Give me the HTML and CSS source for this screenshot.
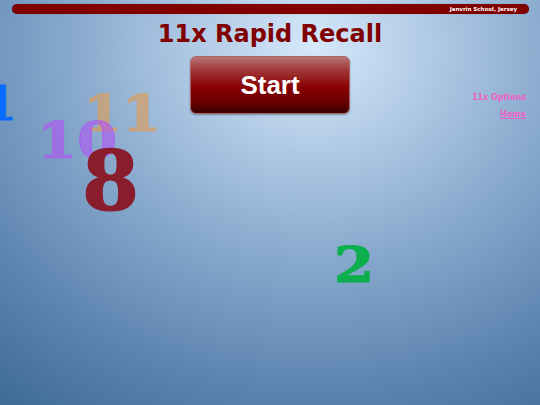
FILE: index.html
```html
<!DOCTYPE html>
<html>
<head>
<meta charset="utf-8">
<link rel="stylesheet" href="styles.css">
</head>
<body>
<div class="page">
  <div class="topbar"><span class="school">Janvrin School, Jersey</span></div>
  <h1 class="title">11x Rapid Recall</h1>
  <div class="main">
    <div class="spacer"></div>
    <button class="start">Start</button>
    <nav class="links">
      <a class="opt">11x Options</a>
      <a class="home">Home</a>
    </nav>
  </div>
  <div class="canvas">
    <span class="num n1">1</span>
    <span class="num n11">11</span>
    <span class="num n10">10</span>
    <span class="num n8">8</span>
    <span class="num n2">2</span>
  </div>
</div>
</body>
</html>
```
FILE: styles.css
```css
html, body {
  margin: 0;
  padding: 0;
  width: 540px;
  height: 405px;
  overflow: hidden;
}
body {
  background: radial-gradient(ellipse 95% 110% at 58% 12%, #d6e8fb 0%, #b2cbe6 22%, #86a8cc 48%, #5f86b2 75%, #3f6a98 100%);
  font-family: "DejaVu Sans", Verdana, sans-serif;
}
.page {
  position: relative;
  width: 540px;
  height: 405px;
}
.topbar {
  margin: 4px 11px 0 12px;
  height: 10px;
  background: #800000;
  border-radius: 5px;
  display: flex;
  justify-content: flex-end;
  align-items: center;
  padding-right: 12px;
  box-shadow: 0 0 1px rgba(0,0,0,0.4);
}
.school {
  color: #fff;
  font-size: 5.5px;
  font-weight: bold;
}
.title {
  margin: 5px 0 0 0;
  text-align: center;
  color: #800000;
  font-size: 24px;
  font-weight: bold;
  line-height: 30px;
}
.main {
  display: grid;
  grid-template-columns: 1fr 160px 1fr;
  margin-top: 7px;
}
.start {
  width: 160px;
  height: 58px;
  border: 1px solid #a86666;
  border-radius: 6px;
  background: linear-gradient(to bottom, #b87575 0%, #a03a3a 22%, #880000 55%, #6a0000 80%, #3a0000 100%);
  color: #fff;
  font-family: "Liberation Sans", Arial, sans-serif;
  font-weight: bold;
  font-size: 26px;
  padding: 0;
  box-shadow: 0 1px 2px rgba(0,0,0,0.35);
}
.links {
  display: flex;
  flex-direction: column;
  align-items: flex-end;
  padding: 37px 14px 0 0;
  gap: 7px;
}
.links a {
  color: #f25fc4;
  font-size: 8px;
  font-weight: bold;
  line-height: 10px;
}
.links .home {
  text-decoration: underline;
}
.num {
  position: absolute;
  font-family: "DejaVu Serif", "Liberation Serif", serif;
  font-weight: bold;
  line-height: 1;
  -webkit-text-stroke: 1.2px currentColor;
  transform-origin: left top;
}
.n1 { left: -17px; top: 77px; font-size: 46px; color: #0a6cff; transform: scaleX(1.05); }
.n11 { left: 83px; top: 84px; font-size: 51px; color: rgba(214, 160, 104, 0.72); transform: scaleX(1.1); }
.n10 { left: 37px; top: 112px; font-size: 50px; color: rgba(176, 84, 245, 0.6); transform: scaleX(1.15); }
.n8 { left: 82px; top: 136px; font-size: 82px; color: #8a1d2c; }
.n2 { left: 334px; top: 237px; font-size: 48px; color: #0bb04c; transform: scaleX(1.2); }
```
